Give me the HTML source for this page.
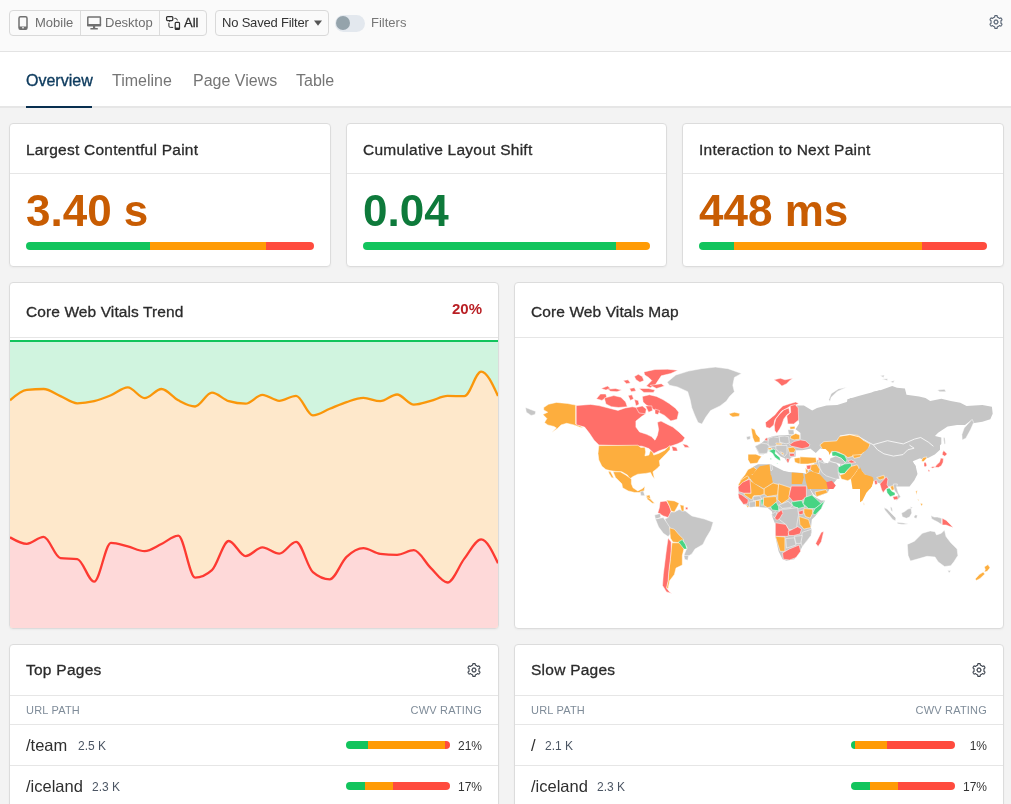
<!DOCTYPE html>
<html><head><meta charset="utf-8">
<style>html{will-change:transform}body{will-change:transform}
*{box-sizing:border-box;margin:0;padding:0}
html,body{width:1011px;height:804px;overflow:hidden}
body{background:#f3f3f3;font-family:"Liberation Sans",sans-serif;color:#2d2d2d;position:relative}
.abs{position:absolute}
#hdr{left:0;top:0;width:1011px;height:52px;background:#fafafa;border-bottom:1px solid #e3e3e3}
#tabs{left:0;top:52px;width:1011px;height:56px;background:#fff;border-bottom:2px solid #e6e6e6}
.tab{position:absolute;top:19px;font-size:16px;color:#757575;white-space:nowrap;line-height:20px}
.tab.on{color:#0c3a5d;-webkit-text-stroke:0.35px #0c3a5d}
#ul{left:26px;top:106px;width:66px;height:2px;background:#082f4f}
.card{position:absolute;background:#fff;border:1px solid #dcdcdc;border-radius:4px;box-shadow:0 1px 2px rgba(0,0,0,0.04);overflow:hidden}
.ch{position:absolute;left:16px;font-size:15.5px;letter-spacing:0.25px;color:#2b2b2b;white-space:nowrap;line-height:20px;-webkit-text-stroke:0.3px #2b2b2b}
.sep{position:absolute;left:0;right:0;height:1px;background:#e6e6e6}
.val{position:absolute;left:16px;top:62px;font-size:44px;font-weight:bold;line-height:50px;white-space:nowrap}
.bar{position:absolute;height:8px;border-radius:4px;overflow:hidden;display:flex}
.g{background:#12c45d}.o{background:#ff9b06}.r{background:#ff4b3e}
.btn{position:absolute;font-size:13px;color:#6e6e6e;white-space:nowrap;line-height:16px}
.colh{position:absolute;font-size:11px;letter-spacing:0.2px;color:#7f8c99;white-space:nowrap;line-height:14px}
.path{position:absolute;font-size:16.5px;color:#2f2f2f;white-space:nowrap;line-height:20px}
.cnt{position:absolute;font-size:12px;color:#4b5563;white-space:nowrap;line-height:14px}
.pct{position:absolute;font-size:12px;color:#333;white-space:nowrap;line-height:16px;text-align:right}
</style></head>
<body>
<svg width="0" height="0" style="position:absolute"><defs><symbol id="gear" viewBox="0 0 16 16"><path d="M13.00,8.00L12.99,8.26L12.97,8.52L12.94,8.78L12.89,9.04L12.93,9.32L13.77,9.87L13.97,10.29L13.85,10.60L13.70,10.91L13.54,11.20L13.37,11.49L13.18,11.76L12.97,12.03L12.51,12.06L11.61,11.61L11.35,11.72L11.15,11.89L10.94,12.05L10.72,12.19L10.50,12.33L10.27,12.46L10.03,12.57L9.79,12.67L9.55,12.76L9.32,12.93L9.26,13.93L9.00,14.32L8.67,14.36L8.33,14.39L8.00,14.40L7.67,14.39L7.33,14.36L7.00,14.32L6.74,13.93L6.68,12.93L6.45,12.76L6.21,12.67L5.97,12.57L5.73,12.46L5.50,12.33L5.28,12.19L5.06,12.05L4.85,11.89L4.65,11.72L4.39,11.61L3.49,12.06L3.03,12.03L2.82,11.76L2.63,11.49L2.46,11.20L2.30,10.91L2.15,10.60L2.03,10.29L2.23,9.87L3.07,9.32L3.11,9.04L3.06,8.78L3.03,8.52L3.01,8.26L3.00,8.00L3.01,7.74L3.03,7.48L3.06,7.22L3.11,6.96L3.07,6.68L2.23,6.13L2.03,5.71L2.15,5.40L2.30,5.09L2.46,4.80L2.63,4.51L2.82,4.24L3.03,3.97L3.49,3.94L4.39,4.39L4.65,4.28L4.85,4.11L5.06,3.95L5.28,3.81L5.50,3.67L5.73,3.54L5.97,3.43L6.21,3.33L6.45,3.24L6.68,3.07L6.74,2.07L7.00,1.68L7.33,1.64L7.67,1.61L8.00,1.60L8.33,1.61L8.67,1.64L9.00,1.68L9.26,2.07L9.32,3.07L9.55,3.24L9.79,3.33L10.03,3.43L10.27,3.54L10.50,3.67L10.72,3.81L10.94,3.95L11.15,4.11L11.35,4.28L11.61,4.39L12.51,3.94L12.97,3.97L13.18,4.24L13.37,4.51L13.54,4.80L13.70,5.09L13.85,5.40L13.97,5.71L13.77,6.13L12.93,6.68L12.89,6.96L12.94,7.22L12.97,7.48L12.99,7.74Z" fill="none" stroke="currentColor" stroke-width="1.15" stroke-linejoin="round"/><path d="M10.10,8.00L9.05,9.82L6.95,9.82L5.90,8.00L6.95,6.18L9.05,6.18Z" fill="none" stroke="currentColor" stroke-width="1.2" stroke-linejoin="round"/></symbol></defs></svg>
<!-- header -->
<div id="hdr" class="abs">
  <div class="abs" style="left:9px;top:10px;width:198px;height:26px;border:1px solid #d9d9d9;border-radius:4px;background:#fafafa"></div>
  <div class="abs" style="left:80px;top:11px;width:1px;height:24px;background:#dcdcdc"></div>
  <div class="abs" style="left:159px;top:11px;width:1px;height:24px;background:#dcdcdc"></div>
  <!-- mobile icon -->
  <svg class="abs" style="left:17px;top:16px" width="12" height="14" viewBox="0 0 12 14"><rect x="2" y="0.8" width="8" height="12.4" rx="1.5" fill="none" stroke="#707070" stroke-width="1.5"/><rect x="2" y="10.5" width="8" height="2.7" fill="#707070"/><rect x="5" y="11.3" width="2" height="1" fill="#fafafa"/></svg>
  <div class="btn" style="left:35px;top:15px">Mobile</div>
  <!-- desktop icon -->
  <svg class="abs" style="left:86px;top:16px" width="16" height="14" viewBox="0 0 16 14"><rect x="1.8" y="1" width="12.6" height="8.6" rx="0.5" fill="none" stroke="#707070" stroke-width="1.5"/><rect x="1.1" y="8" width="14" height="2.3" fill="#707070"/><rect x="7" y="10" width="2.2" height="2.4" fill="#707070"/><rect x="4.3" y="12" width="7.6" height="1.5" rx="0.5" fill="#707070"/></svg>
  <div class="btn" style="left:105px;top:15px">Desktop</div>
  <!-- all icon -->
  <svg class="abs" style="left:165px;top:15px" width="16" height="16" viewBox="0 0 16 16"><rect x="1.6" y="1.6" width="6.2" height="3.9" rx="0.9" fill="none" stroke="#2f2f2f" stroke-width="1.25"/><path d="M4.6 5.6v1.2" stroke="#2f2f2f" stroke-width="1.2"/><path d="M3.9 8.2v2.9q0 1.3 1.3 1.3h2.6" fill="none" stroke="#2f2f2f" stroke-width="1" stroke-linecap="round"/><path d="M9.8 3.4h0.9q1.3 0 1.6 1.6" fill="none" stroke="#2f2f2f" stroke-width="1" stroke-linecap="round"/><rect x="10.2" y="7.4" width="4.3" height="6.9" rx="0.9" fill="none" stroke="#2f2f2f" stroke-width="1.2"/><rect x="10.2" y="12.6" width="4.3" height="1.7" fill="#2f2f2f"/></svg>
  <div class="btn" style="left:184px;top:15px;color:#2a2a2a;-webkit-text-stroke:0.3px #2a2a2a">All</div>
  <!-- saved filter -->
  <div class="abs" style="left:215px;top:10px;width:114px;height:26px;border:1px solid #d9d9d9;border-radius:4px;background:#fafafa"></div>
  <div class="btn" style="left:222px;top:15px;color:#333;letter-spacing:-0.2px">No Saved Filter</div>
  <svg class="abs" style="left:314px;top:20px" width="8" height="6" viewBox="0 0 8 6"><path d="M0 0.5h8L4 5.8z" fill="#555"/></svg>
  <!-- toggle -->
  <div class="abs" style="left:335px;top:15px;width:30px;height:17px;border-radius:9px;background:#e3e8ee"></div>
  <div class="abs" style="left:336px;top:16px;width:14px;height:14px;border-radius:7px;background:#94a3ab"></div>
  <div class="btn" style="left:371px;top:15px;color:#777">Filters</div>
  <!-- gear -->
  <svg class="abs" style="left:988px;top:14px;color:#596575" width="16" height="16"><use href="#gear"/></svg>
</div>
<!-- tabs -->
<div id="tabs" class="abs">
  <div class="tab on" style="left:26px">Overview</div>
  <div class="tab" style="left:112px">Timeline</div>
  <div class="tab" style="left:193px">Page Views</div>
  <div class="tab" style="left:296px">Table</div>
</div>
<div id="ul" class="abs"></div>

<!-- metric cards -->
<div class="card" style="left:9px;top:123px;width:322px;height:144px">
  <div class="ch" style="top:15.5px">Largest Contentful Paint</div>
  <div class="sep" style="top:49px"></div>
  <div class="val" style="color:#c85c02">3.40 s</div>
  <div class="bar" style="left:16px;top:118px;width:288px"><div class="g" style="width:124px"></div><div class="o" style="width:116px"></div><div class="r" style="flex:1"></div></div>
</div>
<div class="card" style="left:346px;top:123px;width:321px;height:144px">
  <div class="ch" style="top:15.5px">Cumulative Layout Shift</div>
  <div class="sep" style="top:49px"></div>
  <div class="val" style="color:#0e7a3b">0.04</div>
  <div class="bar" style="left:16px;top:118px;width:287px"><div class="g" style="width:253px"></div><div class="o" style="flex:1"></div></div>
</div>
<div class="card" style="left:682px;top:123px;width:322px;height:144px">
  <div class="ch" style="top:15.5px">Interaction to Next Paint</div>
  <div class="sep" style="top:49px"></div>
  <div class="val" style="color:#c85c02">448 ms</div>
  <div class="bar" style="left:16px;top:118px;width:288px"><div class="g" style="width:35px"></div><div class="o" style="width:188px"></div><div class="r" style="flex:1"></div></div>
</div>

<!-- trend card -->
<div class="card" id="trend" style="left:9px;top:282px;width:490px;height:347px">
  <div class="ch" style="top:18.5px;letter-spacing:0.1px">Core Web Vitals Trend</div>
  <div class="abs" style="right:16px;top:16px;font-size:15px;font-weight:bold;color:#b91f24;line-height:20px">20%</div>
  <div class="sep" style="top:54px"></div>
  <!--CHART--><svg class="abs" style="left:0;top:0" width="488" height="345" viewBox="10 283 488 345">
<rect x="10" y="340" width="488" height="288" fill="#d0f4df"/>
<path d="M10.00,400.30C15.61,395.40 21.22,390.50 26.83,389.90C32.44,389.30 38.05,389.00 43.66,389.00C49.26,389.00 54.87,393.72 60.48,396.10C66.09,398.48 71.70,403.30 77.31,403.30C82.92,403.30 88.53,402.53 94.14,401.20C99.75,399.87 105.36,397.60 110.97,395.30C116.57,393.00 122.18,387.40 127.79,387.40C133.40,387.40 139.01,398.10 144.62,398.10C150.23,398.10 155.84,389.00 161.45,389.00C167.06,389.00 172.67,397.38 178.28,400.30C183.89,403.22 189.49,406.50 195.10,406.50C200.71,406.50 206.32,392.70 211.93,392.70C217.54,392.70 223.15,399.53 228.76,401.20C234.37,402.87 239.98,403.70 245.59,403.70C251.20,403.70 256.80,394.90 262.41,394.90C268.02,394.90 273.63,400.80 279.24,400.80C284.85,400.80 290.46,395.80 296.07,395.80C301.68,395.80 307.29,415.40 312.90,415.40C318.51,415.40 324.11,411.02 329.72,408.80C335.33,406.58 340.94,403.92 346.55,402.10C352.16,400.28 357.77,397.90 363.38,397.90C368.99,397.90 374.60,401.20 380.21,401.20C385.82,401.20 391.43,394.50 397.03,394.50C402.64,394.50 408.25,404.60 413.86,404.60C419.47,404.60 425.08,402.35 430.69,400.90C436.30,399.45 441.91,395.90 447.52,395.90C453.13,395.90 458.74,396.20 464.34,396.20C469.95,396.20 475.56,371.60 481.17,371.60C486.78,371.60 492.39,383.80 498.00,396.00L498,628L10,628Z" fill="#fee8cb"/>
<path d="M10.00,537.30C15.61,540.55 21.22,543.80 26.83,543.80C32.44,543.80 38.05,536.80 43.66,536.80C49.26,536.80 54.87,557.43 60.48,558.10C66.09,558.77 71.70,558.43 77.31,559.10C82.92,559.77 88.53,581.70 94.14,581.70C99.75,581.70 105.36,542.80 110.97,542.80C116.57,542.80 122.18,545.02 127.79,546.40C133.40,547.78 139.01,551.10 144.62,551.10C150.23,551.10 155.84,546.58 161.45,544.00C167.06,541.42 172.67,535.60 178.28,535.60C183.89,535.60 189.49,577.60 195.10,577.60C200.71,577.60 206.32,575.10 211.93,570.10C217.54,565.10 223.15,541.00 228.76,541.00C234.37,541.00 239.98,556.10 245.59,556.10C251.20,556.10 256.80,547.40 262.41,547.40C268.02,547.40 273.63,553.60 279.24,553.60C284.85,553.60 290.46,541.80 296.07,541.80C301.68,541.80 307.29,567.30 312.90,572.10C318.51,576.90 324.11,579.30 329.72,579.30C335.33,579.30 340.94,562.08 346.55,556.90C352.16,551.72 357.77,548.20 363.38,548.20C368.99,548.20 374.60,553.30 380.21,553.90C385.82,554.50 391.43,554.80 397.03,554.80C402.64,554.80 408.25,550.20 413.86,550.20C419.47,550.20 425.08,562.52 430.69,567.90C436.30,573.28 441.91,582.50 447.52,582.50C453.13,582.50 458.74,565.80 464.34,558.60C469.95,551.40 475.56,539.30 481.17,539.30C486.78,539.30 492.39,551.25 498.00,563.20L498,628L10,628Z" fill="#fed9d9"/>
<path d="M10,341H498" stroke="#12c45d" stroke-width="2"/>
<path d="M10.00,400.30C15.61,395.40 21.22,390.50 26.83,389.90C32.44,389.30 38.05,389.00 43.66,389.00C49.26,389.00 54.87,393.72 60.48,396.10C66.09,398.48 71.70,403.30 77.31,403.30C82.92,403.30 88.53,402.53 94.14,401.20C99.75,399.87 105.36,397.60 110.97,395.30C116.57,393.00 122.18,387.40 127.79,387.40C133.40,387.40 139.01,398.10 144.62,398.10C150.23,398.10 155.84,389.00 161.45,389.00C167.06,389.00 172.67,397.38 178.28,400.30C183.89,403.22 189.49,406.50 195.10,406.50C200.71,406.50 206.32,392.70 211.93,392.70C217.54,392.70 223.15,399.53 228.76,401.20C234.37,402.87 239.98,403.70 245.59,403.70C251.20,403.70 256.80,394.90 262.41,394.90C268.02,394.90 273.63,400.80 279.24,400.80C284.85,400.80 290.46,395.80 296.07,395.80C301.68,395.80 307.29,415.40 312.90,415.40C318.51,415.40 324.11,411.02 329.72,408.80C335.33,406.58 340.94,403.92 346.55,402.10C352.16,400.28 357.77,397.90 363.38,397.90C368.99,397.90 374.60,401.20 380.21,401.20C385.82,401.20 391.43,394.50 397.03,394.50C402.64,394.50 408.25,404.60 413.86,404.60C419.47,404.60 425.08,402.35 430.69,400.90C436.30,399.45 441.91,395.90 447.52,395.90C453.13,395.90 458.74,396.20 464.34,396.20C469.95,396.20 475.56,371.60 481.17,371.60C486.78,371.60 492.39,383.80 498.00,396.00" fill="none" stroke="#fa960a" stroke-width="2.3"/>
<path d="M10.00,537.30C15.61,540.55 21.22,543.80 26.83,543.80C32.44,543.80 38.05,536.80 43.66,536.80C49.26,536.80 54.87,557.43 60.48,558.10C66.09,558.77 71.70,558.43 77.31,559.10C82.92,559.77 88.53,581.70 94.14,581.70C99.75,581.70 105.36,542.80 110.97,542.80C116.57,542.80 122.18,545.02 127.79,546.40C133.40,547.78 139.01,551.10 144.62,551.10C150.23,551.10 155.84,546.58 161.45,544.00C167.06,541.42 172.67,535.60 178.28,535.60C183.89,535.60 189.49,577.60 195.10,577.60C200.71,577.60 206.32,575.10 211.93,570.10C217.54,565.10 223.15,541.00 228.76,541.00C234.37,541.00 239.98,556.10 245.59,556.10C251.20,556.10 256.80,547.40 262.41,547.40C268.02,547.40 273.63,553.60 279.24,553.60C284.85,553.60 290.46,541.80 296.07,541.80C301.68,541.80 307.29,567.30 312.90,572.10C318.51,576.90 324.11,579.30 329.72,579.30C335.33,579.30 340.94,562.08 346.55,556.90C352.16,551.72 357.77,548.20 363.38,548.20C368.99,548.20 374.60,553.30 380.21,553.90C385.82,554.50 391.43,554.80 397.03,554.80C402.64,554.80 408.25,550.20 413.86,550.20C419.47,550.20 425.08,562.52 430.69,567.90C436.30,573.28 441.91,582.50 447.52,582.50C453.13,582.50 458.74,565.80 464.34,558.60C469.95,551.40 475.56,539.30 481.17,539.30C486.78,539.30 492.39,551.25 498.00,563.20" fill="none" stroke="#fd3a32" stroke-width="2.3"/>
</svg><!--/CHART-->
</div>

<!-- map card -->
<div class="card" id="map" style="left:514px;top:282px;width:490px;height:347px">
  <div class="ch" style="top:18.5px;letter-spacing:0.1px">Core Web Vitals Map</div>
  <div class="sep" style="top:54px"></div>
  <!--MAP--><svg class="abs" style="left:0;top:0" width="488" height="345" viewBox="515 283 488 345">
<g stroke="#fff" stroke-width="0.5" stroke-linejoin="round">
<path d="M525.5,407.5L529.5,409.1L535.8,411.4L535.0,414.6L531.1,415.4L526.3,412.2Z" fill="#c6c6c6"/>
<path d="M543.7,407.5L548.5,404.3L556.4,402.4L567.5,403.5L575.7,405.1L575.7,424.1L580.1,425.7L583.3,428.1L580.1,427.3L573.8,424.9L566.7,423.3L561.1,424.9L557.2,428.8L551.7,432.5L556.4,428.1L554.0,426.5L547.7,424.9L544.5,422.5L546.9,418.6L542.9,414.6L547.7,412.2L543.7,409.9Z" fill="#fdae3e"/>
<path d="M576.2,405.6L590.5,404.4L598.9,405.6L608.4,408.0L618.0,410.4L625.1,408.0L632.3,406.8L639.5,408.0L643.1,411.6L645.4,414.0L641.9,416.3L635.9,421.1L635.9,427.1L639.5,431.9L646.6,434.3L651.4,436.6L655.0,440.2L657.4,435.4L658.6,429.5L657.4,422.3L661.0,421.1L668.1,424.7L672.9,427.1L678.9,431.9L684.9,437.8L682.5,441.4L677.7,443.8L670.5,446.2L665.7,448.6L658.6,451.0L653.8,453.4L649.0,448.6L641.9,446.2L598.9,445.0L594.1,440.2L589.3,433.1L584.6,427.1L576.2,424.7Z" fill="#ff6f69"/>
<path d="M682.5,443.8L687.2,445.0L689.6,447.4L684.9,447.4Z" fill="#ff6f69"/>
<path d="M671.7,446.2L676.5,447.4L677.7,451.0L672.9,451.0Z" fill="#ff6f69"/>
<path d="M643.9,371.9L655.0,369.5L667.6,369.2L677.9,370.3L670.8,373.5L661.3,375.8L658.1,380.6L655.0,385.3L650.2,387.7L646.3,386.1L651.8,380.6L648.6,377.4L644.7,375.0Z" fill="#ff6f69"/>
<path d="M634.4,376.6L638.3,374.2L642.3,376.6L643.9,380.6L639.9,382.2L636.0,379.8Z" fill="#ff6f69"/>
<path d="M623.3,380.6L628.1,379.8L630.4,382.9L626.5,383.7Z" fill="#ff6f69"/>
<path d="M601.1,388.5L607.5,386.1L610.6,388.5L605.9,390.1Z" fill="#ff6f69"/>
<path d="M607.5,389.3L615.4,388.5L621.7,390.1L617.0,391.7L610.6,391.3Z" fill="#ff6f69"/>
<path d="M629.6,388.5L634.4,387.7L636.0,390.9L631.2,391.7Z" fill="#ff6f69"/>
<path d="M639.1,388.5L648.6,388.5L655.0,390.1L653.4,392.4L643.9,392.4Z" fill="#ff6f69"/>
<path d="M596.4,398.8L600.4,394.0L605.9,394.0L606.7,397.2L601.9,400.4Z" fill="#ff6f69"/>
<path d="M604.3,398.0L613.8,395.6L620.9,397.2L625.7,401.9L627.3,406.7L618.6,407.5L611.4,406.7L605.9,404.0Z" fill="#ff6f69"/>
<path d="M628.1,395.6L632.0,394.8L633.6,398.8L630.4,400.4Z" fill="#ff6f69"/>
<path d="M634.4,399.6L638.3,400.4L639.1,404.3L636.0,405.9Z" fill="#ff6f69"/>
<path d="M642.3,396.4L649.4,394.8L656.5,396.4L662.9,399.6L669.2,403.5L675.5,408.3L678.7,412.2L677.1,419.3L670.8,420.9L664.5,415.4L658.1,412.2L651.8,408.3L646.3,405.1L643.1,401.9Z" fill="#ff6f69"/>
<path d="M636.0,407.5L642.3,405.9L646.3,409.1L645.5,413.8L639.1,413.0Z" fill="#ff6f69"/>
<path d="M650.2,385.3L661.3,383.7L664.5,386.1L656.5,388.5Z" fill="#ff6f69"/>
<path d="M645.5,405.9L651.8,405.9L652.6,410.6L648.6,412.2Z" fill="#ff6f69"/>
<path d="M655.0,409.1L659.7,410.6L658.1,414.6L655.0,413.8Z" fill="#ff6f69"/>
<path d="M598.8,445.6L637.8,445.2L640.9,447.6L644.9,447.2L645.7,451.9L644.9,455.9L648.9,455.1L650.5,450.3L652.9,452.7L653.7,455.1L658.5,453.5L664.8,450.3L668.8,446.4L670.0,445.6L670.0,449.6L666.4,453.5L662.4,457.5L659.3,460.7L660.0,465.5L656.9,468.7L652.9,471.8L654.5,479.0L652.1,475.8L650.5,472.6L645.7,473.4L637.8,474.2L633.0,476.6L629.8,479.0L627.4,475.0L621.8,471.8L615.5,471.4L609.9,470.6L605.9,469.5L601.9,466.3L598.8,459.9L598.0,453.5Z" fill="#fdae3e"/>
<path d="M608.3,471.0L610.7,471.8L613.9,478.2L611.5,477.4L609.1,473.4Z" fill="#fdae3e"/>
<path d="M613.1,471.8L620.2,471.8L625.8,475.0L631.4,479.0L631.4,483.8L633.0,487.8L637.8,490.9L642.5,488.6L644.9,486.2L644.1,490.9L640.9,492.5L634.6,492.5L628.2,490.9L622.6,487.8L621.8,483.8L615.5,477.4Z" fill="#fdae3e"/>
<path d="M640.1,491.7L643.3,490.9L644.9,495.7L640.9,495.7Z" fill="#c6c6c6"/>
<path d="M645.7,495.7L649.7,494.9L650.5,498.9L647.3,498.1Z" fill="#fdae3e"/>
<path d="M667.1,382.2L675.8,375.0L688.5,371.1L701.1,368.7L715.4,367.1L728.1,368.7L741.5,373.5L734.4,377.4L732.8,385.3L734.4,391.7L729.6,396.4L726.5,401.1L720.1,405.9L710.6,410.6L705.9,417.0L701.9,424.1L698.0,422.5L694.8,415.4L691.7,407.5L690.1,399.6L687.7,391.7L677.4,386.9L669.5,385.3Z" fill="#c6c6c6"/>
<path d="M728.8,413.8L734.4,412.2L739.9,413.5L739.1,416.2L732.8,417.0L730.4,415.4Z" fill="#fdae3e"/>
<path d="M773.9,379.8L780.3,378.2L785.0,379.8L792.9,378.2L789.8,380.6L786.6,383.7L781.9,386.1L777.9,382.2Z" fill="#ff6f69"/>
<path d="M796.8,405.6L803.9,405.6L812.2,410.4L817.0,408.0L826.5,405.6L837.2,405.0L846.6,402.0L850.2,398.5L858.5,396.1L866.8,393.7L880.0,390.2L880.0,453.1L866.8,453.1L843.1,453.1L833.6,451.9L826.5,453.1L820.5,448.3L815.8,453.1L809.9,448.3L809.9,444.8L800.4,440.0L800.4,432.9L795.6,429.3L799.2,423.4L798.0,415.1Z" fill="#c6c6c6" stroke="none"/>
<path d="M828.8,399.7L831.2,393.7L838.3,389.0L846.6,387.2L837.2,391.4L831.2,397.3L830.0,401.5Z" fill="#c6c6c6"/>
<path d="M840.0,407.5L847.9,405.9L847.1,399.6L851.1,398.0L855.8,401.1L860.6,398.0L865.3,398.0L873.2,391.7L881.1,390.1L892.2,386.1L897.0,387.7L904.9,388.5L906.5,394.8L919.1,396.4L925.5,398.0L930.2,401.1L941.3,398.8L950.8,401.1L960.3,402.7L966.6,405.9L982.4,405.1L991.9,406.7L992.7,413.8L990.3,419.3L982.4,421.7L972.9,423.3L971.4,420.1L965.0,424.9L957.1,424.9L947.6,426.5L938.1,432.8L935.0,436.0L941.3,437.5L941.3,443.9L935.0,450.2L930.2,455.0L920.7,458.1L912.8,461.3L916.0,467.6L917.5,473.9L914.4,480.3L909.6,486.6L887.5,486.6L871.7,480.3L862.2,470.8L840.0,470.8Z" fill="#c6c6c6" stroke="none"/>
<path d="M880.4,375.8L884.3,375.0L883.5,377.4Z" fill="#c6c6c6"/>
<path d="M881.9,379.0L887.5,378.7L887.5,380.6Z" fill="#c6c6c6"/>
<path d="M890.6,381.4L894.6,380.6L893.0,382.9Z" fill="#c6c6c6"/>
<path d="M937.3,390.1L944.5,389.3L946.0,391.7L939.7,391.7Z" fill="#c6c6c6"/>
<path d="M748.5,473.7L751.7,467.4L758.0,464.2L770.6,464.2L777.0,467.4L786.5,472.2L792.8,472.2L803.1,472.9L806.3,473.7L808.6,486.4L813.4,495.9L821.3,500.6L825.2,500.6L821.3,508.6L815.0,516.5L811.8,519.6L811.0,527.5L811.8,532.3L808.6,538.6L802.3,546.5L799.1,552.9L794.4,559.2L786.5,560.8L782.5,559.2L778.6,551.3L775.4,537.0L775.4,524.4L772.2,516.5L772.2,511.7L767.5,507.8L758.0,507.0L748.5,507.0L743.7,503.8L739.0,495.9L738.2,488.0L742.2,478.5Z" fill="#c6c6c6" stroke="none"/>
<path d="M806.3,473.7L813.4,464.2L818.1,459.5L830.8,461.1L837.1,467.4L840.3,475.3L830.8,486.4L827.6,492.7L816.5,496.7L813.4,494.3L808.6,486.4Z" fill="#c6c6c6" stroke="none"/>
<path d="M755.1,446.3L761.5,443.1L767.1,438.3L773.4,435.9L784.6,435.1L790.9,435.1L800.5,439.1L810.0,443.9L810.0,448.7L802.1,450.2L795.7,450.2L795.7,456.6L790.9,457.4L787.8,463.0L784.6,458.2L780.6,456.6L775.8,451.8L773.4,449.5L769.5,447.1L767.9,451.8L763.9,454.2L759.1,454.2Z" fill="#c6c6c6" stroke="none"/>
<path d="M765.4,422.4L769.9,418.9L774.8,414.9L778.8,409.9L782.8,405.9L788.8,404.0L795.7,402.0L798.7,403.5L794.7,405.4L789.8,406.4L786.8,408.4L781.8,410.9L777.8,415.9L774.8,419.9L773.8,424.9L769.9,428.3L766.1,427.3Z" fill="#ff6f69"/>
<path d="M774.3,424.9L775.8,418.9L779.8,413.9L783.8,409.9L788.8,407.9L789.8,412.9L786.8,414.9L783.8,418.9L781.8,424.9L779.8,428.8L776.8,433.3L774.8,430.8Z" fill="#ff6f69"/>
<path d="M786.8,415.9L790.7,412.4L790.2,405.9L795.2,404.5L798.2,407.9L798.7,419.9L793.7,423.9L787.8,423.9Z" fill="#ff6f69"/>
<path d="M789.8,426.8L794.7,426.3L795.2,428.8L790.2,429.3Z" fill="#fdae3e"/>
<path d="M787.8,429.8L793.7,429.8L794.2,434.8L788.8,434.8Z" fill="#c6c6c6"/>
<path d="M790.9,435.9L795.7,433.5L799.7,435.1L799.7,439.1L794.1,439.9L790.1,438.3Z" fill="#fdae3e"/>
<path d="M789.4,444.7L794.1,441.5L800.5,439.9L805.3,440.7L810.0,444.7L808.5,447.1L802.1,448.7L795.7,447.1L791.7,446.3Z" fill="#ff6f69"/>
<path d="M779.0,436.7L784.6,435.9L788.6,436.7L789.4,443.1L786.2,443.9L779.8,442.3Z" fill="#c6c6c6"/>
<path d="M768.7,438.3L773.4,436.7L777.4,437.5L779.0,436.7L779.8,442.3L778.2,444.7L775.0,446.3L769.5,446.3L767.9,443.1Z" fill="#c6c6c6"/>
<path d="M764.7,439.1L767.1,437.5L767.9,440.7L765.5,440.7Z" fill="#ff6f69"/>
<path d="M751.1,428.0L754.7,429.6L756.3,434.3L759.9,437.9L759.9,441.9L754.7,442.3L752.7,437.5L751.9,432.7Z" fill="#fdae3e"/>
<path d="M746.4,436.7L750.3,435.9L750.3,439.1L747.2,439.9Z" fill="#c6c6c6"/>
<path d="M755.1,446.3L761.5,443.1L767.1,443.9L769.5,447.1L767.9,450.2L767.1,453.4L759.1,453.4L757.5,450.2Z" fill="#c6c6c6"/>
<path d="M767.9,447.9L771.8,447.9L771.0,449.9L768.3,449.5Z" fill="#fdae3e"/>
<path d="M775.8,443.1L782.2,443.5L781.4,444.7L776.6,444.7Z" fill="#fdae3e"/>
<path d="M775.8,445.5L787.0,445.5L787.0,453.4L784.6,456.6L781.4,454.2L778.2,451.0L775.8,448.7Z" fill="#c6c6c6"/>
<path d="M787.8,447.9L793.3,447.1L795.7,449.5L794.1,452.6L789.4,452.6Z" fill="#fdae3e"/>
<path d="M789.4,453.4L794.1,453.4L794.9,455.8L790.1,456.6Z" fill="#ff6f69"/>
<path d="M780.6,451.8L783.8,453.4L783.0,455.0Z" fill="#fdae3e"/>
<path d="M786.2,458.2L789.4,459.0L788.6,463.0L787.0,461.4Z" fill="#ff6f69"/>
<path d="M768.3,451.0L773.4,449.1L775.8,449.9L775.0,453.4L779.8,457.4L780.6,460.6L779.0,460.2L775.0,457.4L772.6,453.4L770.2,451.8Z" fill="#47d483"/>
<path d="M769.9,458.2L771.4,458.2L771.0,460.2Z" fill="#47d483"/>
<path d="M776.6,463.0L778.2,463.0L777.4,463.8Z" fill="#47d483"/>
<path d="M748.0,454.2L755.9,454.2L761.5,456.6L759.1,459.8L757.5,463.0L750.3,463.8L748.0,459.8Z" fill="#fdae3e"/>
<path d="M794.1,458.2L803.7,457.0L814.8,458.2L816.4,462.2L808.5,463.4L798.9,463.8L794.9,462.2Z" fill="#fdae3e"/>
<path d="M806.9,465.4L811.6,465.0L810.0,468.6L806.9,469.4Z" fill="#ff6f69"/>
<path d="M740.0,480.5L744.8,474.9L748.0,469.4L753.5,467.0L756.7,469.4L753.5,474.1L748.0,477.3L742.4,482.1Z" fill="#fdae3e"/>
<path d="M752.7,474.1L756.7,469.4L759.9,466.2L769.5,464.6L770.2,470.9L771.0,477.3L771.8,484.0L752.7,484.0Z" fill="#fdae3e" stroke="none"/>
<path d="M770.2,464.6L771.8,464.6L772.6,469.4L771.0,470.9Z" fill="#c6c6c6"/>
<path d="M771.8,470.9L778.2,472.5L784.6,470.9L790.9,472.5L791.7,484.0L771.8,484.0Z" fill="#c6c6c6" stroke="none"/>
<path d="M791.7,472.5L802.9,473.3L803.7,477.3L802.1,484.0L791.7,484.0Z" fill="#fdae3e" stroke="none"/>
<path d="M805.3,467.8L808.5,470.9L806.1,474.1Z" fill="#fdae3e"/>
<path d="M819.9,444.9L823.9,441.7L836.6,440.9L839.8,436.1L850.9,434.6L858.1,435.3L862.9,440.1L870.0,444.1L867.7,450.5L862.9,452.9L860.5,455.2L854.1,456.0L847.8,457.6L844.6,455.2L838.2,452.1L831.8,451.3L829.5,455.2L825.5,452.1L822.3,448.9Z" fill="#fdae3e"/>
<path d="M831.8,452.1L835.0,451.3L844.6,455.2L847.0,460.0L845.4,462.4L841.4,458.4L835.8,456.0L832.2,456.0Z" fill="#47d483"/>
<path d="M829.5,458.4L835.8,456.0L841.4,458.4L845.4,462.4L843.0,464.8L836.6,463.2L830.2,461.6Z" fill="#c6c6c6"/>
<path d="M852.5,455.2L861.3,454.5L860.5,456.8L854.1,458.4Z" fill="#fdae3e"/>
<path d="M847.8,460.8L851.7,460.0L855.7,462.4L850.9,463.2Z" fill="#ff6f69"/>
<path d="M818.3,460.8L823.9,463.2L830.2,461.6L836.6,463.2L839.8,467.2L838.2,472.8L839.8,479.1L835.8,479.1L826.3,475.9L822.3,472.8L819.9,468.0Z" fill="#c6c6c6"/>
<path d="M838.2,467.2L844.6,464.0L850.9,463.2L851.7,466.4L847.0,470.4L844.6,473.6L839.8,473.6L838.2,471.2Z" fill="#47d483"/>
<path d="M839.8,475.1L844.6,473.6L850.9,466.4L857.3,464.8L858.9,468.0L855.7,472.8L850.9,479.1L847.8,480.7L841.4,479.1Z" fill="#fdae3e"/>
<path d="M850.9,479.1L855.7,472.8L858.9,468.0L863.7,474.4L870.0,476.7L873.2,477.5L873.2,482.3L870.0,489.0L852.5,489.0Z" fill="#fdae3e" stroke="none"/>
<path d="M800.0,456.8L815.9,457.6L816.7,462.4L808.0,464.0L800.0,464.0Z" fill="#fdae3e"/>
<path d="M818.3,457.6L822.3,458.4L821.5,460.4L818.7,460.0Z" fill="#ff6f69"/>
<path d="M806.4,465.6L811.9,464.8L811.1,468.8L807.2,469.6Z" fill="#ff6f69"/>
<path d="M811.1,464.8L816.7,464.0L819.9,469.6L819.1,473.6L814.3,472.8L810.3,469.6Z" fill="#fdae3e"/>
<path d="M804.8,474.4L811.1,471.2L819.9,474.4L823.9,479.1L830.2,485.5L830.2,489.0L808.0,489.0L805.6,480.7Z" fill="#fdae3e" stroke="none"/>
<path d="M826.3,482.3L831.8,480.7L835.8,485.5L833.4,489.0L827.9,489.0Z" fill="#ff6f69" stroke="none"/>
<path d="M819.9,448.9L825.5,448.9L828.7,452.1L830.2,458.4L827.9,463.2L823.9,462.4L820.7,456.8L819.1,452.1Z" fill="#fff" stroke="none"/>
<path d="M738.0,485.3L741.1,479.8L747.5,475.8L749.1,478.2L741.9,483.8L739.6,486.1Z" fill="#fdae3e"/>
<path d="M738.0,486.9L742.7,482.2L749.9,479.0L751.1,481.4L751.1,493.3L744.3,493.3L738.8,491.7Z" fill="#ff6f69"/>
<path d="M749.9,479.0L751.5,481.4L762.6,488.5L764.2,489.3L764.2,494.1L759.5,495.7L753.9,495.7L751.5,499.7L744.3,494.9L744.3,493.3L751.1,493.3Z" fill="#fdae3e"/>
<path d="M747.5,475.0L771.4,475.0L773.0,482.2L764.2,488.5L753.9,483.0Z" fill="#fdae3e" stroke="none"/>
<path d="M771.4,475.0L790.5,475.0L790.5,486.9L779.4,483.0L773.0,482.2Z" fill="#c6c6c6" stroke="none"/>
<path d="M764.2,488.5L773.0,483.0L778.6,484.6L777.8,494.9L767.4,496.5L764.2,494.1Z" fill="#fdae3e"/>
<path d="M778.6,483.8L790.5,487.7L788.9,498.9L781.7,503.7L777.8,499.7L777.8,494.9Z" fill="#fdae3e"/>
<path d="M791.3,486.1L806.4,486.1L806.4,497.3L801.6,500.5L792.9,501.3L788.9,496.5Z" fill="#ff6f69"/>
<path d="M791.3,502.1L801.6,500.5L804.8,506.8L798.5,508.4L792.9,506.0Z" fill="#47d483"/>
<path d="M763.4,497.3L776.2,496.5L777.0,501.3L771.4,506.8L767.4,507.6L763.4,505.2Z" fill="#fdae3e"/>
<path d="M770.6,506.8L776.2,502.1L778.6,506.8L778.6,510.8L772.2,510.0Z" fill="#47d483"/>
<path d="M778.6,505.2L788.1,501.3L792.1,505.2L790.5,507.6L782.5,508.4Z" fill="#c6c6c6"/>
<path d="M779.4,509.2L785.7,509.2L797.7,507.6L798.5,514.8L796.9,524.4L796.9,529.1L788.9,529.9L785.7,524.4L779.4,519.6Z" fill="#c6c6c6"/>
<path d="M771.4,514.8L775.4,511.6L777.8,514.8L774.6,518.0Z" fill="#c6c6c6"/>
<path d="M775.4,522.8L785.7,524.4L788.9,529.9L788.1,536.3L775.4,536.3Z" fill="#ff6f69"/>
<path d="M788.1,531.5L797.7,526.7L801.6,529.1L800.0,533.9L793.7,535.5L788.9,535.5Z" fill="#ff6f69"/>
<path d="M798.5,511.6L803.2,510.0L803.2,514.0L799.3,514.8Z" fill="#ff6f69"/>
<path d="M738.0,493.3L741.9,494.9L748.3,499.7L747.5,503.7L743.5,504.5L738.8,498.1Z" fill="#ff6f69"/>
<path d="M753.1,496.5L759.5,495.7L761.8,498.9L756.3,500.5L753.1,500.5Z" fill="#c6c6c6"/>
<path d="M749.1,502.1L755.5,501.3L755.5,506.8L749.9,507.6Z" fill="#c6c6c6"/>
<path d="M755.5,500.5L759.5,500.5L759.5,506.8L755.5,506.8Z" fill="#fdae3e"/>
<path d="M761.0,499.7L763.4,498.9L762.6,505.2L761.4,505.2Z" fill="#47d483"/>
<path d="M745.9,504.5L749.1,506.8L747.5,507.6Z" fill="#fdae3e"/>
<path d="M804.7,497.5L811.8,495.1L818.1,500.6L821.3,503.8L815.0,508.6L808.6,508.6L803.1,503.8Z" fill="#47d483"/>
<path d="M815.0,508.6L821.3,503.8L824.5,500.6L821.3,508.6L815.0,514.9L812.6,513.3Z" fill="#47d483"/>
<path d="M803.9,508.6L812.6,509.3L812.6,513.3L810.2,518.1L805.5,516.5L803.9,512.5Z" fill="#fdae3e"/>
<path d="M799.1,516.5L808.6,519.6L811.0,527.5L803.9,529.1L799.9,524.4Z" fill="#fdae3e"/>
<path d="M802.3,532.3L811.8,529.1L811.0,535.5L802.3,546.5L800.7,541.8Z" fill="#c6c6c6"/>
<path d="M775.4,536.3L784.9,537.0L784.9,551.3L780.1,551.3Z" fill="#fdae3e"/>
<path d="M785.7,538.6L794.4,537.8L796.0,545.0L786.5,548.1Z" fill="#c6c6c6"/>
<path d="M794.4,536.3L802.3,535.5L800.7,543.4L796.0,543.4Z" fill="#c6c6c6"/>
<path d="M782.5,552.9L789.6,548.9L799.1,545.0L800.7,551.3L796.0,557.6L789.6,560.0L783.3,559.2Z" fill="#ff6f69"/>
<path d="M821.3,532.3L823.7,531.5L821.3,541.8L818.1,546.5L815.7,543.4Z" fill="#ff6f69"/>
<path d="M815.0,491.9L826.0,489.6L827.6,492.7L816.5,496.7Z" fill="#fdae3e"/>
<path d="M860.0,456.9L864.8,451.4L869.6,446.6L871.9,445.0L940.0,445.0L940.0,449.8L934.8,454.6L928.5,457.7L922.1,459.3L918.9,457.7L911.7,460.9L915.7,465.7L916.5,475.2L910.9,482.4L903.0,484.8L897.4,484.8L893.4,483.2L888.7,478.4L883.9,475.2L879.9,476.0L875.9,478.4L871.9,476.8L864.8,474.5L861.6,470.5L860.0,467.3Z" fill="#c6c6c6" stroke="none"/>
<path d="M860.0,467.3L861.6,470.5L864.8,474.5L871.9,476.8L873.5,480.0L871.9,486.4L866.4,492.8L862.4,500.7L860.0,502.3Z" fill="#fdae3e" stroke="none"/>
<path d="M876.7,477.6L883.9,475.2L884.7,478.4L879.9,480.0Z" fill="#fdae3e"/>
<path d="M874.3,480.8L876.7,480.0L877.5,484.0L875.1,484.8Z" fill="#ff6f69"/>
<path d="M893.4,484.0L897.4,484.0L896.6,487.2L898.2,492.8L900.6,496.7L896.6,500.7L895.0,497.5L898.2,495.1L895.0,491.2L893.4,488.0Z" fill="#c6c6c6"/>
<path d="M879.9,484.0L886.3,476.8L887.9,479.2L887.1,484.8L888.7,487.2L885.5,489.6L883.1,492.8L881.5,489.6Z" fill="#ff6f69"/>
<path d="M890.2,486.4L893.4,485.6L894.2,489.6L891.8,490.4Z" fill="#fdae3e"/>
<path d="M886.3,488.8L889.5,488.0L891.8,491.2L895.0,492.8L895.0,495.1L890.2,496.7L887.1,492.8Z" fill="#47d483"/>
<path d="M892.6,496.7L897.4,495.9L898.2,499.1L894.2,499.9Z" fill="#ff6f69"/>
<path d="M915.7,491.2L917.3,490.4L916.5,495.1Z" fill="#fdae3e"/>
<path d="M917.7,499.1L918.9,499.9L918.1,500.7Z" fill="#fdae3e"/>
<path d="M920.5,503.1L922.9,503.9L921.3,506.3Z" fill="#fdae3e"/>
<path d="M863.2,502.3L864.4,503.9L864.0,505.5Z" fill="#fdae3e"/>
<path d="M942.5,452.7L943.7,450.6L947.2,453.9L944.9,456.3L942.2,454.8Z" fill="#ff6f69"/>
<path d="M940.7,458.1L943.4,458.4L943.1,462.2L941.3,465.8L938.3,467.6L934.7,467.3L937.1,464.3L939.5,462.2Z" fill="#ff6f69"/>
<path d="M930.5,467.3L932.9,466.4L935.3,466.7L932.9,468.2Z" fill="#ff6f69"/>
<path d="M928.1,469.4L929.9,470.6L929.3,471.8L928.1,471.2Z" fill="#ff6f69"/>
<path d="M921.6,459.9L923.4,457.5L926.9,456.9L926.3,458.7L924.6,460.4L923.4,461.6L921.9,461.6Z" fill="#fdae3e"/>
<path d="M924.0,462.5L925.7,462.2L926.9,465.2L925.7,466.7L924.0,466.4Z" fill="#ff6f69"/>
<path d="M943.4,437.8L944.9,437.8L945.4,443.7L944.3,444.3Z" fill="#c6c6c6"/>
<path d="M961.9,434.4L964.2,428.1L972.1,419.3L973.7,422.5L970.6,429.6L965.8,438.3L962.2,439.9Z" fill="#c6c6c6"/>
<path d="M907.3,544.4L914.4,541.2L922.3,533.3L930.2,530.9L935.0,531.7L936.5,534.9L941.3,533.3L944.5,530.1L946.0,536.5L950.8,542.8L957.1,549.1L957.9,555.5L953.9,561.8L950.8,565.7L944.5,566.5L938.1,561.8L935.0,557.0L927.0,556.3L919.1,558.6L910.4,561.0L908.1,555.5Z" fill="#c6c6c6"/>
<path d="M947.6,570.5L950.8,570.5L949.2,572.9Z" fill="#c6c6c6"/>
<path d="M984.3,566.9L988.0,564.6L990.0,567.8L987.2,571.3L984.3,572.1L985.3,569.4Z" fill="#fdae3e"/>
<path d="M975.3,578.9L979.3,574.5L983.2,572.1L984.8,574.1L980.1,578.4L976.4,580.5Z" fill="#fdae3e"/>
<path d="M884.0,507.5L887.2,509.1L891.9,513.9L895.9,517.9L895.5,521.0L892.7,519.5L888.8,514.7L884.8,509.9Z" fill="#c6c6c6"/>
<path d="M890.3,506.7L891.9,507.5L892.7,511.5L891.1,510.7Z" fill="#c6c6c6"/>
<path d="M897.1,522.2L903.9,523.0L908.3,524.1L903.1,524.5L897.5,523.8Z" fill="#c6c6c6"/>
<path d="M901.5,513.1L904.7,511.5L907.9,509.1L911.0,508.3L911.8,513.1L909.5,517.1L906.3,518.3L902.3,516.7Z" fill="#c6c6c6"/>
<path d="M910.2,506.7L912.6,507.5L911.0,508.7Z" fill="#c6c6c6"/>
<path d="M914.2,516.3L915.8,514.7L917.4,515.5L916.6,518.3L914.2,517.9Z" fill="#c6c6c6"/>
<path d="M930.9,515.5L934.1,517.1L937.3,517.1L941.7,518.3L941.7,524.6L937.3,521.8L934.1,520.2L931.7,518.7Z" fill="#c6c6c6"/>
<path d="M942.2,518.3L946.1,520.2L949.3,523.4L953.2,527.4L950.0,526.6L946.1,525.0L942.2,525.0Z" fill="#ff6f69"/>
<path d="M774.6,518.0L777.8,512.4L781.7,510.0L782.9,513.2L779.8,518.4L777.0,520.4Z" fill="#ff6f69"/>
<path d="M645.9,496.1L650.6,499.3L654.6,503.2L652.2,503.2L647.5,499.3Z" fill="#fdae3e"/>
<path d="M669.6,511.9L674.4,511.9L679.1,509.6L685.5,511.1L691.8,515.9L704.5,519.1L713.2,522.2L710.8,530.1L706.0,538.1L702.9,544.4L695.0,549.1L691.8,553.9L687.0,557.0L683.9,555.5L687.0,547.5L682.3,539.6L677.5,536.5L671.2,530.1L666.5,523.8L664.9,519.1L668.1,517.5Z" fill="#c6c6c6"/>
<path d="M660.1,501.7L666.5,500.9L669.6,506.4L671.2,511.1L668.1,517.5L663.3,515.9L657.8,512.7L659.3,508.0Z" fill="#ff6f69"/>
<path d="M666.5,500.1L674.4,500.9L679.1,503.2L677.5,506.4L674.4,511.9L671.2,511.1L669.6,506.4Z" fill="#fdae3e"/>
<path d="M679.9,504.8L683.9,505.6L683.9,511.1L681.5,511.1Z" fill="#fdae3e"/>
<path d="M685.5,507.2L687.8,507.2L687.8,509.6L685.5,509.6Z" fill="#ff6f69"/>
<path d="M654.6,515.1L660.1,513.5L660.9,517.5L655.4,519.1Z" fill="#c6c6c6"/>
<path d="M655.4,519.1L663.3,517.5L666.5,522.2L669.6,527.0L671.2,533.3L668.1,536.5L663.3,533.3L658.6,527.0Z" fill="#c6c6c6"/>
<path d="M669.6,527.8L674.4,529.3L679.1,534.9L683.9,539.6L679.1,542.8L672.8,542.0L670.4,538.1Z" fill="#fdae3e"/>
<path d="M678.3,542.0L682.3,539.6L685.5,544.4L687.0,549.1L683.9,549.1L679.9,546.0Z" fill="#47d483"/>
<path d="M683.9,555.5L688.6,555.5L687.8,560.2L684.7,559.4Z" fill="#c6c6c6"/>
<path d="M672.0,542.8L679.1,542.8L683.9,549.1L682.3,555.5L682.3,565.0L676.0,568.1L674.4,574.5L669.6,580.8L668.1,588.7L666.5,587.9L668.1,580.8L668.8,571.3L670.4,558.6L671.2,549.1Z" fill="#fdae3e"/>
<path d="M668.1,538.1L671.2,542.0L671.2,549.1L670.4,558.6L668.8,571.3L668.1,580.8L666.5,587.9L669.6,591.9L672.0,593.4L666.5,591.9L662.5,585.5L663.3,574.5L664.9,561.8L666.5,549.1Z" fill="#ff6f69"/>
</g>
<path d="M873.5,445.0L877.5,449.8L883.9,453.8L893.4,456.1L903.0,454.6L907.8,449.8L914.1,448.2L909.4,445.0" fill="none" stroke="#fff" stroke-width="0.8"/>
<path d="M840.0,436.0L849.5,434.4L859.0,436.8L868.5,442.3L873.2,444.7L887.5,440.7L903.3,443.9L914.4,439.1L920.7,437.5L928.6,442.3L933.4,446.3" fill="none" stroke="#fff" stroke-width="0.8"/>
</svg><!--/MAP-->
</div>

<!-- top pages -->
<div class="card" style="left:9px;top:644px;width:490px;height:200px">
  <div class="ch" style="top:15px">Top Pages</div>
  <svg class="abs" style="left:456px;top:17px;color:#3f4650" width="16" height="16"><use href="#gear"/></svg>
  <div class="sep" style="top:50px"></div>
  <div class="colh" style="left:16px;top:58px">URL PATH</div>
  <div class="colh" style="right:16px;top:58px">CWV RATING</div>
  <div class="sep" style="top:79px"></div>
  <div class="path" style="left:16px;top:90px">/team</div>
  <div class="cnt" style="left:68px;top:94px">2.5 K</div>
  <div class="bar" style="left:336px;top:96px;width:104px"><div class="g" style="width:22px"></div><div class="o" style="width:77px"></div><div class="r" style="flex:1"></div></div>
  <div class="pct" style="right:16px;top:93px">21%</div>
  <div class="sep" style="top:120px"></div>
  <div class="path" style="left:16px;top:131px">/iceland</div>
  <div class="cnt" style="left:82px;top:135px">2.3 K</div>
  <div class="bar" style="left:336px;top:137px;width:104px"><div class="g" style="width:19px"></div><div class="o" style="width:28px"></div><div class="r" style="flex:1"></div></div>
  <div class="pct" style="right:16px;top:134px">17%</div>
</div>

<!-- slow pages -->
<div class="card" style="left:514px;top:644px;width:490px;height:200px">
  <div class="ch" style="top:15px">Slow Pages</div>
  <svg class="abs" style="left:456px;top:17px;color:#3f4650" width="16" height="16"><use href="#gear"/></svg>
  <div class="sep" style="top:50px"></div>
  <div class="colh" style="left:16px;top:58px">URL PATH</div>
  <div class="colh" style="right:16px;top:58px">CWV RATING</div>
  <div class="sep" style="top:79px"></div>
  <div class="path" style="left:16px;top:90px">/</div>
  <div class="cnt" style="left:30px;top:94px">2.1 K</div>
  <div class="bar" style="left:336px;top:96px;width:104px"><div class="g" style="width:4px"></div><div class="o" style="width:32px"></div><div class="r" style="flex:1"></div></div>
  <div class="pct" style="right:16px;top:93px">1%</div>
  <div class="sep" style="top:120px"></div>
  <div class="path" style="left:16px;top:131px">/iceland</div>
  <div class="cnt" style="left:82px;top:135px">2.3 K</div>
  <div class="bar" style="left:336px;top:137px;width:104px"><div class="g" style="width:19px"></div><div class="o" style="width:28px"></div><div class="r" style="flex:1"></div></div>
  <div class="pct" style="right:16px;top:134px">17%</div>
</div>
</body></html>
